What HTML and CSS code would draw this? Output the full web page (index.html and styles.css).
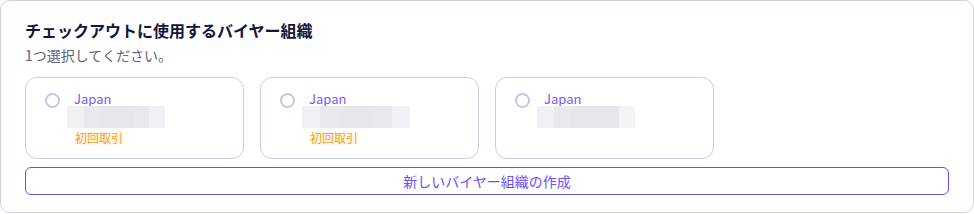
FILE: index.html
```html
<!DOCTYPE html>
<html>
<head>
    <title>バイヤー組織の選択</title>
    <link rel="stylesheet" href="styles.css">
</head>
<body>
    <div class="panel">
        <h2 class="title">チェックアウトに使用するバイヤー組織</h2>
        <p class="hint">1つ選択してください。</p>

        <div class="orgs">
            <!-- 組織カード -->
            <label class="org">
                <span class="radio"></span>
                <span class="info">
                    <span class="country">Japan</span>
                    <span class="masked w1"></span>
                    <span class="tag">初回取引</span>
                </span>
            </label>
            <label class="org">
                <span class="radio"></span>
                <span class="info">
                    <span class="country">Japan</span>
                    <span class="masked w2"></span>
                    <span class="tag">初回取引</span>
                </span>
            </label>
            <label class="org">
                <span class="radio"></span>
                <span class="info">
                    <span class="country">Japan</span>
                    <span class="masked w3"></span>
                </span>
            </label>
        </div>

        <button class="create">新しいバイヤー組織の作成</button>
    </div>
</body>
</html>
```

FILE: styles.css
```css
/* 全体 */
body {
    margin: 0;
    font-family: "Noto Sans CJK JP", "Noto Sans", sans-serif;
    background-color: #ffffff;
}
.panel {
    width: 974px;
    height: 213px;
    box-sizing: border-box;
    border: 1px solid #cfd0e6;
    border-radius: 10px;
    padding: 19px 24px 0 24px;
}
.title {
    margin: 0;
    font-size: 16px;
    line-height: 21px;
    font-weight: 700;
    color: #14143c;
}
.hint {
    margin: 4px 0 0 0;
    font-size: 14px;
    line-height: 20px;
    color: #5f6079;
}
.orgs {
    display: flex;
    gap: 16px;
    margin-top: 12px;
}
.org {
    display: flex;
    align-items: flex-start;
    width: 219px;
    height: 82px;
    box-sizing: border-box;
    border: 1px solid #cbcbe3;
    border-radius: 12px;
    padding: 13px 0 0 19px;
}
.radio {
    width: 15px;
    height: 15px;
    box-sizing: border-box;
    border: 2px solid #c6c6e0;
    border-radius: 50%;
    margin-top: 2px;
    flex-shrink: 0;
}
.info {
    display: flex;
    flex-direction: column;
    align-items: flex-start;
    margin-left: 7px;
}
.country {
    font-size: 13px;
    line-height: 15px;
    color: #7a5af5;
    margin-left: 7px;
}
.masked {
    display: block;
    height: 22px;
    margin-top: 0;
}
.masked.w1 {
    width: 98px;
    background: linear-gradient(to right, #f0f0f4 0 17%, #e8e8ee 17% 34%, #e6e6ec 34% 68%, #e8e8ee 68% 84%, #f1f1f5 84%);
}
.masked.w2 {
    width: 108px;
    background: linear-gradient(to right, #f0f0f4 0 17%, #e8e8ee 17% 34%, #e6e6ec 34% 66%, #e8e8ee 66% 83%, #f2f2f6 83%);
}
.masked.w3 {
    width: 98px;
    background: linear-gradient(to right, #f0f0f4 0 17%, #e8e8ee 17% 34%, #e6e6ec 34% 84%, #f4f4f6 84%);
}
.tag {
    font-size: 12px;
    line-height: 14px;
    color: #f5a315;
    background-color: #fff8ec;
    border-radius: 3px;
    margin: 3px 0 0 7px;
    padding: 0 1px;
}
.create {
    display: block;
    width: 924px;
    height: 28px;
    margin-top: 8px;
    border: 1px solid #6a4ff6;
    border-radius: 6px;
    background-color: #ffffff;
    color: #6a4ff6;
    font-family: "Noto Sans CJK JP", "Noto Sans", sans-serif;
    font-size: 14px;
    cursor: pointer;
}
```
